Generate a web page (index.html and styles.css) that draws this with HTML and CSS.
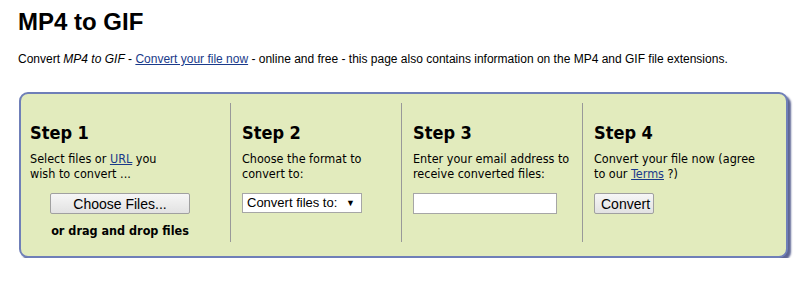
FILE: index.html
```html
<!DOCTYPE html>
<html lang="en">
  <head>
    <meta charset="UTF-8" />
    <title>MP4 to GIF</title>
    <link rel="stylesheet" href="styles.css">
  </head>
  <body>
    <h1>MP4 to GIF</h1>
    <p class="intro">
      Convert <em>MP4 to GIF</em> - <a href="#">Convert your file now</a> - online and free - this page also contains information on the MP4 and GIF file extensions.
    </p>
    <div class="steps">
      <div class="step step-1">
        <h2>Step 1</h2>
        <p>Select files or <a href="#">URL</a> you<br>wish to convert ...</p>
        <div class="upload">
          <button class="choose">Choose Files...</button>
          <div class="drop">or drag and drop files</div>
        </div>
      </div>
      <div class="step">
        <h2>Step 2</h2>
        <p>Choose the format to<br>convert to:</p>
        <div class="select">Convert files to:<span class="arrow">&#9660;</span></div>
      </div>
      <div class="step">
        <h2>Step 3</h2>
        <p>Enter your email address to<br>receive converted files:</p>
        <input type="text" class="email">
      </div>
      <div class="step">
        <h2>Step 4</h2>
        <p>Convert your file now (agree<br>to our <a href="#">Terms</a> ?)</p>
        <button class="convert">Convert</button>
      </div>
    </div>
  </body>
</html>
```

FILE: styles.css
```css
body {
  margin: 0;
  padding: 0 18px;
  background-color: #fff;
  font-family: "Liberation Sans", Arial, sans-serif;
  color: #000;
}
h1 {
  margin: 0;
  padding-top: 8px;
  font-size: 24px;
  line-height: 28px;
  font-weight: bold;
}
.intro {
  margin: 15px 0 0;
  font-size: 12px;
  line-height: 16px;
}
a {
  color: #1a3a8a;
}
.steps {
  margin: 25px 8px 0 1px;
  height: 166px;
  display: grid;
  grid-template-columns: 209px 171px 181px 1fr;
  border: 2px solid #6f7fb8;
  border-radius: 9px;
  background-color: #e2ebbd;
  box-shadow: 3px 3px 2px #5e6694;
  padding: 9px 0 14px;
  box-sizing: border-box;
  width: 769px;
}
.step {
  border-left: 1px solid #999;
  padding: 0 0 0 11px;
  font-family: "DejaVu Sans Condensed", "DejaVu Sans", Verdana, sans-serif;
}
.step-1 {
  border-left: none;
  padding-left: 9px;
}
.step h2 {
  margin: 19px 0 0;
  font-size: 18px;
  line-height: 22px;
  font-weight: bold;
}
.step p {
  margin: 7px 0 0;
  font-size: 12.5px;
  line-height: 15px;
}
.upload {
  width: 180px;
  text-align: center;
}
button {
  font-family: "Liberation Sans", Arial, sans-serif;
  font-size: 14px;
  height: 21px;
  padding: 0 6px;
  border: 1px solid #a0a0a0;
  border-radius: 2px;
  background: linear-gradient(#f6f6f6, #e2e2e2);
  color: #000;
}
.choose {
  margin-top: 12px;
  width: 140px;
}
.drop {
  margin-top: 9px;
  font-size: 12.5px;
  font-weight: bold;
}
.select {
  margin-top: 12px;
  width: 120px;
  height: 20px;
  box-sizing: border-box;
  border: 1px solid #a6a6a6;
  background: #fff;
  font-family: "Liberation Sans", Arial, sans-serif;
  font-size: 13px;
  line-height: 18px;
  padding-left: 4px;
  position: relative;
}
.select .arrow {
  position: absolute;
  right: 6px;
  top: 0;
  font-size: 9px;
}
.email {
  display: block;
  margin: 12px 0 0;
  width: 144px;
  height: 21px;
  box-sizing: border-box;
  border: 1px solid #a6a6a6;
  background: #fff;
}
.convert {
  margin-top: 12px;
  width: 60px;
}
```
